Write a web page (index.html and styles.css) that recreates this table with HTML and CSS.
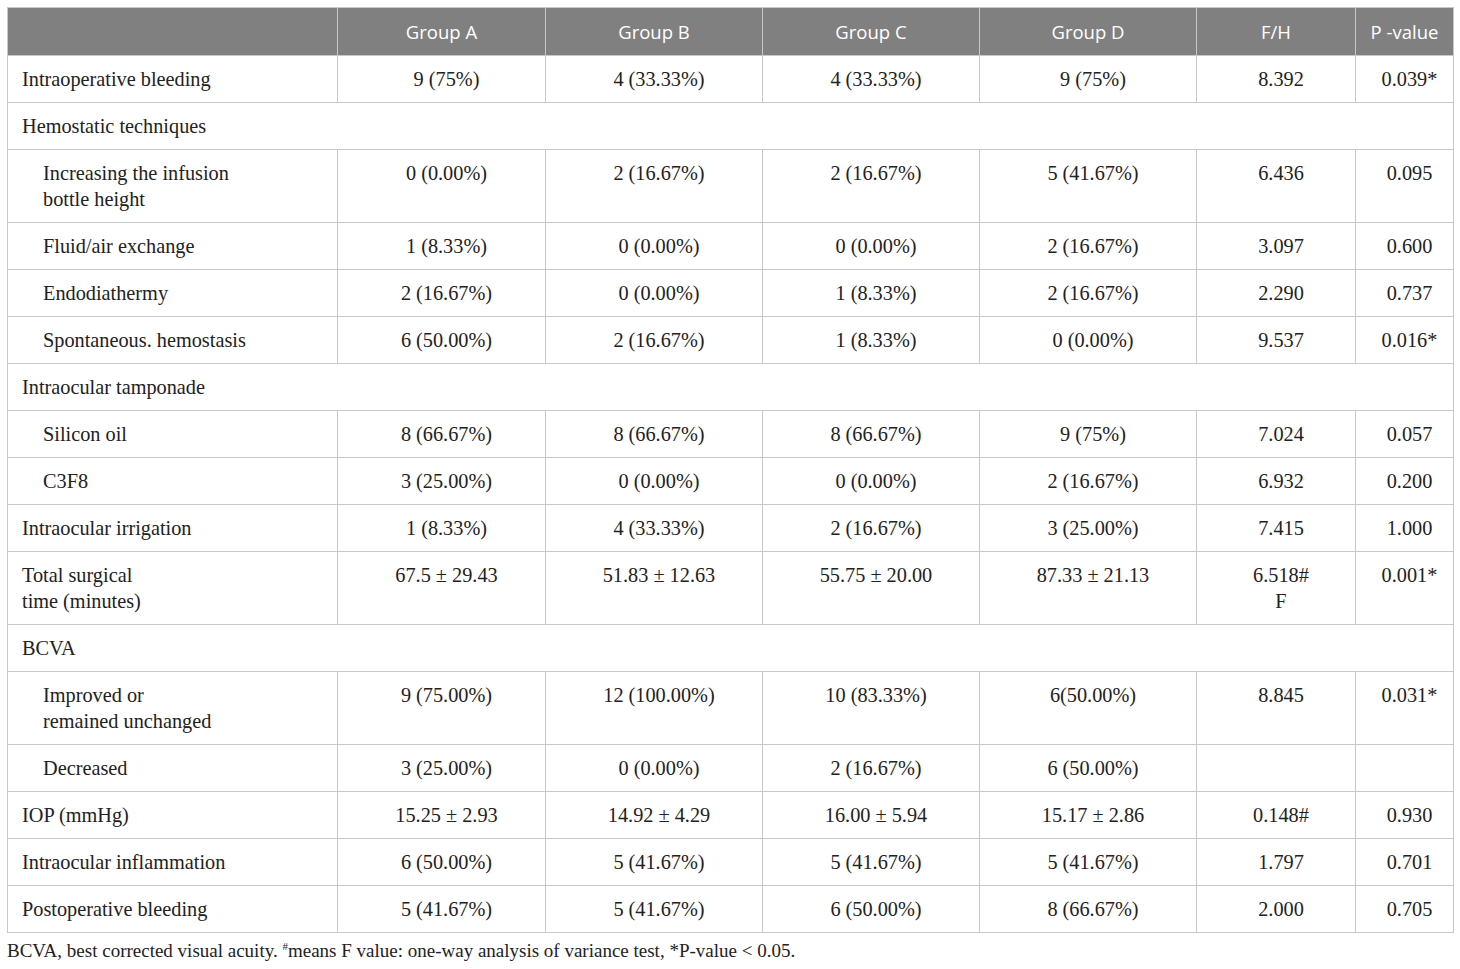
FILE: index.html
```html
<!DOCTYPE html>
<html>
<head>
<meta charset="utf-8">
<link rel="stylesheet" href="styles.css">
</head>
<body>
<div class="wrap">
<table class="tbl">
<colgroup>
<col class="c0"><col class="c1"><col class="c2"><col class="c3"><col class="c4"><col class="c5"><col class="c6">
</colgroup>
<thead>
<tr><th></th><th>Group A</th><th>Group B</th><th>Group C</th><th>Group D</th><th>F/H</th><th>P -value</th></tr>
</thead>
<tbody>
<tr><td>Intraoperative bleeding</td><td>9 (75%)</td><td>4 (33.33%)</td><td>4 (33.33%)</td><td>9 (75%)</td><td>8.392</td><td>0.039*</td></tr>
<tr class="sec"><td colspan="7">Hemostatic techniques</td></tr>
<tr><td class="ind">Increasing the infusion<br>bottle height</td><td>0 (0.00%)</td><td>2 (16.67%)</td><td>2 (16.67%)</td><td>5 (41.67%)</td><td>6.436</td><td>0.095</td></tr>
<tr><td class="ind">Fluid/air exchange</td><td>1 (8.33%)</td><td>0 (0.00%)</td><td>0 (0.00%)</td><td>2 (16.67%)</td><td>3.097</td><td>0.600</td></tr>
<tr><td class="ind">Endodiathermy</td><td>2 (16.67%)</td><td>0 (0.00%)</td><td>1 (8.33%)</td><td>2 (16.67%)</td><td>2.290</td><td>0.737</td></tr>
<tr><td class="ind">Spontaneous. hemostasis</td><td>6 (50.00%)</td><td>2 (16.67%)</td><td>1 (8.33%)</td><td>0 (0.00%)</td><td>9.537</td><td>0.016*</td></tr>
<tr class="sec"><td colspan="7">Intraocular tamponade</td></tr>
<tr><td class="ind">Silicon oil</td><td>8 (66.67%)</td><td>8 (66.67%)</td><td>8 (66.67%)</td><td>9 (75%)</td><td>7.024</td><td>0.057</td></tr>
<tr><td class="ind">C3F8</td><td>3 (25.00%)</td><td>0 (0.00%)</td><td>0 (0.00%)</td><td>2 (16.67%)</td><td>6.932</td><td>0.200</td></tr>
<tr><td>Intraocular irrigation</td><td>1 (8.33%)</td><td>4 (33.33%)</td><td>2 (16.67%)</td><td>3 (25.00%)</td><td>7.415</td><td>1.000</td></tr>
<tr><td>Total surgical<br>time (minutes)</td><td>67.5 ± 29.43</td><td>51.83 ± 12.63</td><td>55.75 ± 20.00</td><td>87.33 ± 21.13</td><td>6.518#<br>F</td><td>0.001*</td></tr>
<tr class="sec"><td colspan="7">BCVA</td></tr>
<tr><td class="ind">Improved or<br>remained unchanged</td><td>9 (75.00%)</td><td>12 (100.00%)</td><td>10 (83.33%)</td><td>6(50.00%)</td><td>8.845</td><td>0.031*</td></tr>
<tr><td class="ind">Decreased</td><td>3 (25.00%)</td><td>0 (0.00%)</td><td>2 (16.67%)</td><td>6 (50.00%)</td><td></td><td></td></tr>
<tr><td>IOP (mmHg)</td><td>15.25 ± 2.93</td><td>14.92 ± 4.29</td><td>16.00 ± 5.94</td><td>15.17 ± 2.86</td><td>0.148#</td><td>0.930</td></tr>
<tr><td>Intraocular inflammation</td><td>6 (50.00%)</td><td>5 (41.67%)</td><td>5 (41.67%)</td><td>5 (41.67%)</td><td>1.797</td><td>0.701</td></tr>
<tr><td>Postoperative bleeding</td><td>5 (41.67%)</td><td>5 (41.67%)</td><td>6 (50.00%)</td><td>8 (66.67%)</td><td>2.000</td><td>0.705</td></tr>
</tbody>
</table>
<p class="note">BCVA, best corrected visual acuity. <sup>#</sup>means F value: one-way analysis of variance test, *P-value &lt; 0.05.</p>
</div>
</body>
</html>
```
FILE: styles.css
```css
html, body {
  margin: 0;
  padding: 0;
  background: #ffffff;
}
.wrap {
  padding: 7px 0 0 7px;
}
.tbl {
  border-collapse: collapse;
  table-layout: fixed;
  width: 1446px;
  font-family: "Liberation Serif", "Times New Roman", serif;
  font-size: 20.3px;
  color: #222222;
}
.c0 { width: 330px; }
.c1 { width: 208px; }
.c2 { width: 217px; }
.c3 { width: 217px; }
.c4 { width: 217px; }
.c5 { width: 159px; }
.c6 { width: 98px; }
.tbl th {
  background: #808080;
  color: #ffffff;
  font-family: "Open Sans", "Liberation Sans", sans-serif;
  font-weight: 400;
  font-size: 18.5px;
  height: 47px;
  padding: 0 4px;
  border: 1px solid #c8c8c8;
  text-align: center;
  vertical-align: middle;
}
.tbl td {
  border: 1px solid #c8c8c8;
  padding: 10px 4px 10px 14px;
  line-height: 26px;
  text-align: center;
  vertical-align: top;
}
.tbl td:first-child {
  text-align: left;
}
.tbl td.ind {
  padding-left: 35px;
}
.note {
  margin: 7px 0 0 0;
  font-family: "Liberation Serif", "Times New Roman", serif;
  font-size: 19px;
  color: #222222;
}
.note sup {
  font-size: 11px;
}
```
